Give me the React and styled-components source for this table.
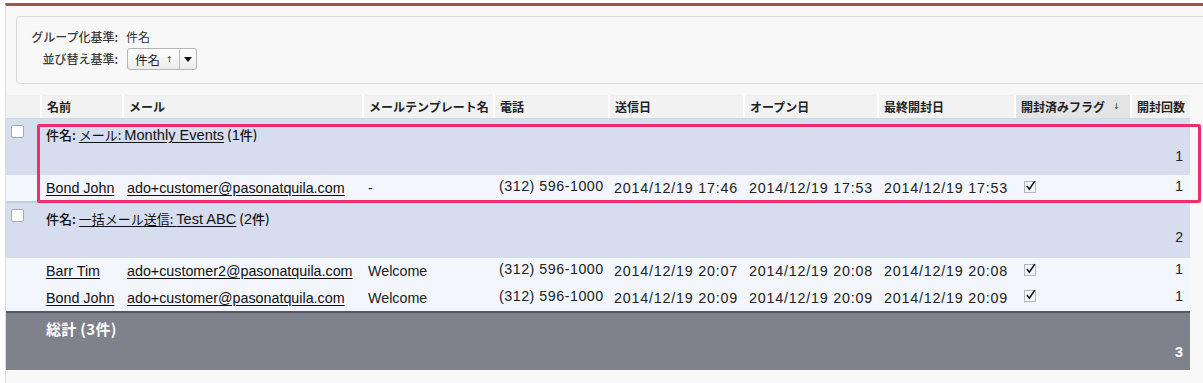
import React from "react";
import styled, { createGlobalStyle } from "styled-components";

const GlobalStyle = createGlobalStyle`
  html, body {
    margin: 0;
    padding: 0;
    background: #ffffff;
    overflow: hidden;
  }
  body {
    font-family: "Liberation Sans", "Noto Sans CJK JP", sans-serif;
    color: #222;
  }
`;

const COLS = "34px 82px 240px 131px 115px 135px 134px 137px 116px 60px";

const Page = styled.div`
  margin: 3px 0 0 5px;
  width: 1230px;
  height: 377px;
  overflow: hidden;
  border-top: 3px solid #9b574a;
  border-left: 1px solid #dcdcdc;
  background: #f8f8f8;
`;

const FilterPanel = styled.div`
  margin: 10px 0 0 10px;
  padding: 12px 0 13px 0;
  border: 1px solid #d9d9d9;
  border-radius: 4px;
  background: #f8f8f8;
  display: grid;
  grid-template-columns: 101px auto;
  column-gap: 8px;
  row-gap: 3px;
  align-items: center;
`;

const FilterLabel = styled.div`
  font-family: "Noto Sans CJK JP", sans-serif;
  font-size: 12px;
  font-weight: 500;
  color: #3a3a3a;
  text-align: right;
  line-height: 16px;
`;

const FilterValue = styled.div`
  font-family: "Noto Sans CJK JP", sans-serif;
  font-size: 12px;
  color: #333;
  line-height: 16px;
`;

const SortSelect = styled.div`
  display: flex;
  align-items: stretch;
  width: 68px;
  height: 20px;
  margin-left: 1px;
  border: 1px solid #b5b5b5;
  border-radius: 3px;
  background: linear-gradient(#ffffff, #ececec);
  font-family: "Noto Sans CJK JP", sans-serif;
  font-size: 12.5px;
  color: #222;
`;

const SortText = styled.div`
  flex: 1;
  display: flex;
  align-items: center;
  padding-left: 7px;
  gap: 6px;
  border-right: 1px solid #bdbdbd;
`;

const Arrow = styled.span`
  font-family: "DejaVu Sans", sans-serif;
  font-size: 8px;
  color: ${(p) => p.color || "#333"};
`;

const SortButton = styled.div`
  width: 16px;
  display: flex;
  align-items: center;
  justify-content: center;
`;

const Table = styled.div`
  margin-top: 11px;
  width: 1184px;
`;

const HeaderRow = styled.div`
  display: grid;
  grid-template-columns: ${COLS};
  height: 23px;
  border-bottom: 1px solid #d2d8e4;
`;

const HeaderCell = styled.div`
  display: flex;
  align-items: center;
  gap: 8px;
  padding-left: 5px;
  background: ${(p) => (p.sorted ? "#e3e4e6" : "#f2f2f2")};
  border-left: ${(p) => (p.first ? "none" : "2px solid #ffffff")};
  font-family: "Noto Sans CJK JP", sans-serif;
  font-weight: 700;
  font-size: 12px;
  color: #222;
  white-space: nowrap;
  overflow: hidden;
`;

const GroupRow = styled.div`
  display: grid;
  grid-template-columns: ${COLS};
  height: ${(p) => p.h}px;
  background: #d5ddef;
  border-top: ${(p) => (p.divider ? "2px solid #c4cbdc" : "none")};
`;

const CheckCell = styled.div`
  padding: 6px 0 0 5px;
`;

const Checkbox = styled.div`
  width: 11px;
  height: 11px;
  border: 1px solid #a9a9a9;
  border-radius: 2px;
  background: #ffffff;
`;

const GroupLabel = styled.div`
  grid-column: 2 / 10;
  padding: 7px 0 0 6px;
  font-family: "Noto Sans CJK JP", sans-serif;
  font-size: 13px;
  color: #222;
  white-space: nowrap;
  line-height: 18px;
`;

const Strong = styled.span`
  font-weight: 500;
  color: #111;
`;

const Link = styled.span`
  text-decoration: underline;
  text-underline-offset: 2px;
  color: #111;
`;

const Latin = styled.span`
  font-family: "Liberation Sans", sans-serif;
  font-size: 14.6px;
`;

const CountCell = styled.div`
  align-self: end;
  text-align: right;
  padding: 0 7px ${(p) => p.pb}px 0;
  font-family: "Liberation Sans", sans-serif;
  font-size: 14px;
  color: #222;
`;

const DetailRow = styled.div`
  display: grid;
  grid-template-columns: ${COLS};
  height: ${(p) => p.h || 26}px;
  align-items: center;
  background: #f3f6fd;
`;

const Cell = styled.div`
  padding-left: ${(p) => p.pl || 6}px;
  padding-right: ${(p) => p.pr || 0}px;
  text-align: ${(p) => p.align || "left"};
  font-size: 14.3px;
  letter-spacing: ${(p) => p.ls || 0}px;
  margin-top: ${(p) => p.mt || 0}px;
  color: #222;
  white-space: nowrap;
  overflow: hidden;
`;

const CellLink = styled.span`
  text-decoration: underline;
  text-underline-offset: 2px;
  color: #111;
`;

const TotalRow = styled.div`
  display: grid;
  grid-template-columns: ${COLS};
  height: 57px;
  background: #7f818c;
  border-top: 2px solid #555862;
  border-bottom: 1px solid #ffffff;
  color: #ffffff;
`;

const TotalLabel = styled.div`
  grid-column: 2 / 10;
  padding: 5px 0 0 6px;
  font-family: "Noto Sans CJK JP", sans-serif;
  font-weight: 700;
  font-size: 15px;
  letter-spacing: 0.3px;
`;

const TotalCount = styled.div`
  align-self: end;
  text-align: right;
  padding: 0 7px 10px 0;
  font-weight: 700;
  font-size: 15px;
`;

const Highlight = styled.div`
  position: absolute;
  left: 37px;
  top: 121px;
  width: 1158px;
  height: 73px;
  border: 3px solid #ef2f6d;
  border-radius: 2px;
  pointer-events: none;
`;

const Checked = () => (
  <svg width="13" height="13" viewBox="0 0 13 13" style={{ display: "block" }}>
    <rect x="0.5" y="1.5" width="11" height="11" fill="none" stroke="#777" strokeWidth="1" strokeDasharray="1 1" />
    <path d="M2.3 6.6 L3.6 5.6 L5.2 8 L10.2 0.8 L11.4 1.6 L5.4 10.4 Z" fill="#111" />
  </svg>
);

const DownTriangle = () => (
  <svg width="8" height="5" viewBox="0 0 8 5">
    <path d="M0 0 L8 0 L4 5 Z" fill="#111" />
  </svg>
);

const headers = [
  "",
  "名前",
  "メール",
  "メールテンプレート名",
  "電話",
  "送信日",
  "オープン日",
  "最終開封日",
  "開封済みフラグ",
  "開封回数",
];

const groups = [
  {
    prefix: "メール: ",
    subject: "Monthly Events",
    n: 1,
    h: 56,
    pb: 11,
    rows: [
      ["Bond John", "ado+customer@pasonatquila.com", "-", "(312) 596-1000", "2014/12/19 17:46", "2014/12/19 17:53", "2014/12/19 17:53", 1],
    ],
  },
  {
    prefix: "一括メール送信: ",
    subject: "Test ABC",
    n: 2,
    h: 55,
    pb: 13,
    rows: [
      ["Barr Tim", "ado+customer2@pasonatquila.com", "Welcome", "(312) 596-1000", "2014/12/19 20:07", "2014/12/19 20:08", "2014/12/19 20:08", 1],
      ["Bond John", "ado+customer@pasonatquila.com", "Welcome", "(312) 596-1000", "2014/12/19 20:09", "2014/12/19 20:09", "2014/12/19 20:09", 1],
    ],
  },
];

const Wrap = styled.div`
  position: relative;
`;

export default function App() {
  return (
    <Wrap>
      <GlobalStyle />
      <Page>
        <FilterPanel>
          <FilterLabel>グループ化基準:</FilterLabel>
          <FilterValue>件名</FilterValue>
          <FilterLabel>並び替え基準:</FilterLabel>
          <SortSelect>
            <SortText>
              件名 <Arrow>↑</Arrow>
            </SortText>
            <SortButton>
              <DownTriangle />
            </SortButton>
          </SortSelect>
        </FilterPanel>

        <Table>
          <HeaderRow>
            {headers.map((h, i) => (
              <HeaderCell key={i} first={i === 0} sorted={i === 8}>
                {h}
                {i === 8 && <Arrow color="#555">↓</Arrow>}
              </HeaderCell>
            ))}
          </HeaderRow>

          {groups.map((g, gi) => (
            <React.Fragment key={gi}>
              <GroupRow h={g.h} divider={gi > 0}>
                <CheckCell>
                  <Checkbox />
                </CheckCell>
                <GroupLabel>
                  <Strong>件名:</Strong>{" "}
                  <Link>
                    {g.prefix}
                    <Latin>{g.subject}</Latin>
                  </Link>{" "}
                  <Strong>
                    (<Latin>{g.n}</Latin>件)
                  </Strong>
                </GroupLabel>
                <CountCell pb={g.pb}>{g.n}</CountCell>
              </GroupRow>
              {g.rows.map((r, ri) => (
                <DetailRow key={ri} h={gi === 0 ? 26 : ri === 0 ? 26 : 27}>
                  <div />
                  <Cell>
                    <CellLink>{r[0]}</CellLink>
                  </Cell>
                  <Cell pl={5}>
                    <CellLink>{r[1]}</CellLink>
                  </Cell>
                  <Cell>{r[2]}</Cell>
                  <Cell ls={0.5} mt={-4}>{r[3]}</Cell>
                  <Cell ls={0.8}>{r[4]}</Cell>
                  <Cell ls={0.8}>{r[5]}</Cell>
                  <Cell pl={7} ls={0.8}>{r[6]}</Cell>
                  <Cell pl={10} mt={-4}>
                    <Checked />
                  </Cell>
                  <Cell align="right" pr={7} mt={-4}>
                    {r[7]}
                  </Cell>
                </DetailRow>
              ))}
            </React.Fragment>
          ))}

          <TotalRow>
            <div />
            <TotalLabel>総計 (3件)</TotalLabel>
            <TotalCount>3</TotalCount>
          </TotalRow>
        </Table>
      </Page>
      <Highlight />
    </Wrap>
  );
}
